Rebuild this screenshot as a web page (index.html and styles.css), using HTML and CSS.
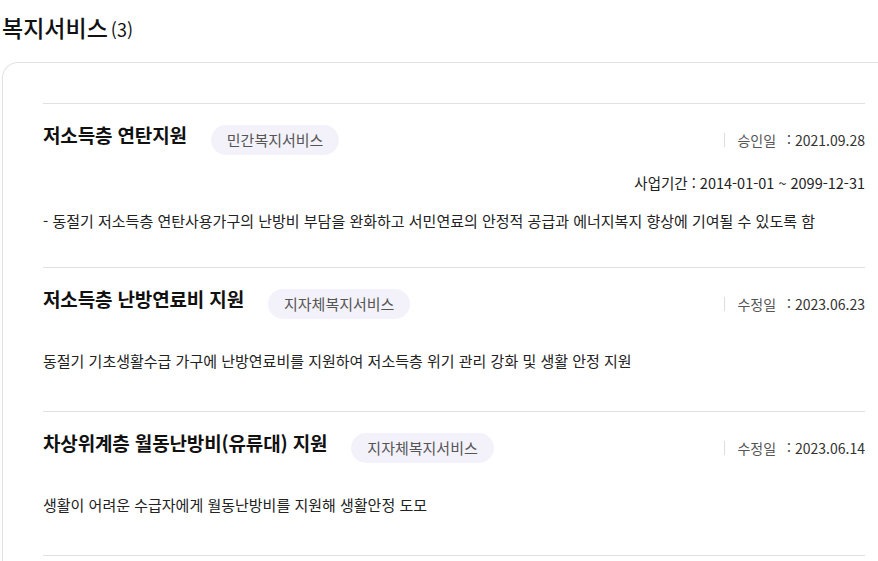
FILE: index.html
```html
<!DOCTYPE html>
<html lang="ko">
<head>
<meta charset="utf-8">
<title>복지서비스</title>
<link rel="stylesheet" href="styles.css">
</head>
<body>
<section class="welfare">
  <h2 class="welfare__title">복지서비스<span class="welfare__count">(3)</span></h2>
  <div class="card">
    <ul class="list">
      <li class="item item--period">
        <div class="item__head">
          <div class="item__name">
            <strong class="item__title">저소득층 연탄지원</strong>
            <span class="badge">민간복지서비스</span>
          </div>
          <div class="meta"><span class="meta__label">승인일</span><span class="meta__colon">:</span><span class="meta__date">2021.09.28</span></div>
        </div>
        <p class="period">사업기간 : 2014-01-01 ~ 2099-12-31</p>
        <p class="item__desc item__desc--tight">- 동절기 저소득층 연탄사용가구의 난방비 부담을 완화하고 서민연료의 안정적 공급과 에너지복지 향상에 기여될 수 있도록 함</p>
      </li>
      <li class="item">
        <div class="item__head">
          <div class="item__name">
            <strong class="item__title">저소득층 난방연료비 지원</strong>
            <span class="badge">지자체복지서비스</span>
          </div>
          <div class="meta"><span class="meta__label">수정일</span><span class="meta__colon">:</span><span class="meta__date">2023.06.23</span></div>
        </div>
        <p class="item__desc">동절기 기초생활수급 가구에 난방연료비를 지원하여 저소득층 위기 관리 강화 및 생활 안정 지원</p>
      </li>
      <li class="item">
        <div class="item__head">
          <div class="item__name">
            <strong class="item__title">차상위계층 월동난방비(유류대) 지원</strong>
            <span class="badge">지자체복지서비스</span>
          </div>
          <div class="meta"><span class="meta__label">수정일</span><span class="meta__colon">:</span><span class="meta__date">2023.06.14</span></div>
        </div>
        <p class="item__desc">생활이 어려운 수급자에게 월동난방비를 지원해 생활안정 도모</p>
      </li>
    </ul>
  </div>
</section>
</body>
</html>
```

FILE: styles.css
```css
html, body {
  margin: 0;
  padding: 0;
  background: #ffffff;
  overflow: hidden;
}

body {
  font-family: "Noto Sans CJK KR", "Noto Sans", sans-serif;
  color: #222222;
}

.welfare__title {
  margin: 0;
  padding: 12px 0 0 2px;
  height: 50px;
  box-sizing: border-box;
  font-size: 23px;
  line-height: 30px;
  font-weight: 500;
  color: #111111;
}

.welfare__count {
  margin-left: 3px;
  font-size: 18px;
  font-weight: 400;
}

.card {
  margin: 12px 0 0 2px;
  padding: 40px 13px 0 40px;
  border: 1px solid #e1e1e1;
  border-right: none;
  border-bottom: none;
  border-radius: 16px 0 0 0;
  min-height: 520px;
}

.list {
  list-style: none;
  margin: 0;
  padding: 0;
}

.item {
  border-top: 1px solid #e1e1e1;
  padding: 21px 0 40px;
}

.item:last-child {
  border-bottom: 1px solid #e1e1e1;
}

.item--period {
  padding-bottom: 36px;
}

.item__head {
  display: flex;
  justify-content: space-between;
  align-items: flex-start;
}

.item__name {
  display: flex;
  align-items: flex-start;
  gap: 24px;
}

.item__title {
  font-size: 19px;
  line-height: 20px;
  font-weight: 700;
  letter-spacing: -0.15px;
  color: #111111;
}

.badge {
  display: inline-block;
  height: 30px;
  padding: 0 16px;
  border-radius: 15px;
  background: #f3f2fa;
  font-size: 15px;
  line-height: 30px;
  color: #555555;
}

.meta {
  display: flex;
  align-items: center;
  height: 30px;
  font-size: 14px;
  color: #444444;
}

.meta::before {
  content: "";
  width: 1px;
  height: 14px;
  margin-right: 12px;
  background: #dddddd;
}

.meta__label {
  color: #555555;
}

.meta__colon {
  margin: 0 4px 0 11px;
  position: relative;
  top: -1px;
}

.meta__date {
  color: #333333;
}

.period {
  margin: 18px 0 0;
  text-align: right;
  font-size: 14.5px;
  line-height: 20px;
  color: #222222;
}

.item__desc {
  margin: 32px 0 0;
  font-size: 15px;
  line-height: 20px;
  color: #222222;
}

.item__desc--tight {
  margin-top: 18px;
}
```
